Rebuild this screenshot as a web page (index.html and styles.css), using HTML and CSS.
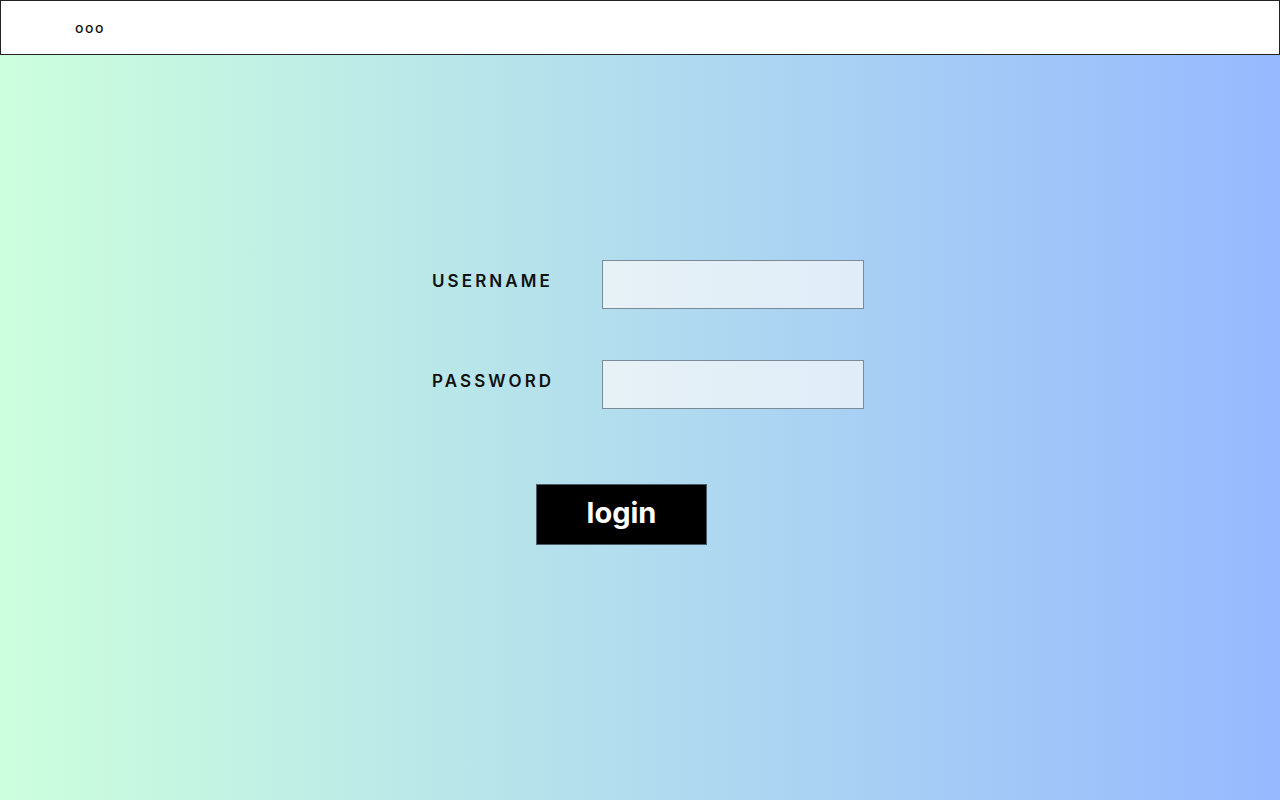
FILE: index.html
```html
<!DOCTYPE html>
<html lang="en">
<head>
<meta charset="utf-8">
<title>Login</title>
<link rel="stylesheet" href="styles.css">
</head>
<body>
<header class="topbar">
  <span class="dots">ooo</span>
</header>
<main class="page">
  <form class="login-form">
    <div class="row">
      <label class="label" for="username">USERNAME</label>
      <input class="field" id="username" type="text">
    </div>
    <div class="row">
      <label class="label" for="password">PASSWORD</label>
      <input class="field" id="password" type="password">
    </div>
    <div class="actions">
      <button class="login-btn" type="button">login</button>
    </div>
  </form>
</main>
</body>
</html>
```
FILE: styles.css
```css
* { box-sizing: border-box; }
html, body { margin: 0; height: 100%; }
body {
  font-family: Inter, "Noto Sans", sans-serif;
  background: linear-gradient(to right, #ccffdd 0%, #96b9ff 100%);
  min-height: 800px;
}
.topbar {
  height: 55px;
  background: #ffffff;
  border: 1px solid #222;
  display: flex;
  align-items: center;
  padding-left: 74px;
}
.dots {
  font-size: 14px;
  font-weight: 500;
  letter-spacing: 1.5px;
  color: #111;
  line-height: 1;
}
.page {
  padding-top: 205px;
  padding-left: 432px;
}
.login-form {
  display: flex;
  flex-direction: column;
  gap: 51px;
}
.row {
  display: grid;
  grid-template-columns: 170px 262px;
  align-items: start;
}
.label {
  font-size: 17px;
  font-weight: 600;
  letter-spacing: 3.1px;
  color: #111;
  padding-top: 11px;
}
.field {
  width: 262px;
  height: 49px;
  border: 1px solid #7a8a96;
  background: linear-gradient(to right, #e6f2f6, #e0ecf8);
  margin: 0;
  outline: none;
}
.actions {
  padding-left: 104px;
  margin-top: 24px;
}
.login-btn {
  width: 171px;
  height: 61px;
  background: #000;
  color: #fff;
  border: 1px solid #4a5a66;
  font-family: Inter, "Noto Sans", sans-serif;
  font-size: 29px;
  font-weight: 700;
  padding: 0 0 4px 0;
  cursor: pointer;
}
```
